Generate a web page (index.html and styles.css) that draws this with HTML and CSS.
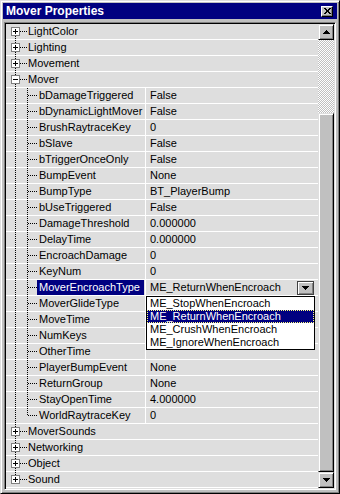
FILE: index.html
```html
<!DOCTYPE html>
<html lang="en">
<head>
    <meta charset="UTF-8">
    <title>Mover Properties</title>
    <link rel="stylesheet" href="styles.css">
</head>
<body>
    <div class="window">
        <div class="titlebar">
            <span>Mover Properties</span>
            <div class="close">
                <svg width="7" height="6" viewBox="0 0 7 6" shape-rendering="crispEdges">
                    <path d="M0 0h2v1H0zM5 0h2v1H5zM1 1h2v1H1zM4 1h2v1H4zM2 2h3v2H2zM1 4h2v1H1zM4 4h2v1H4zM0 5h2v1H0zM5 5h2v1H5z" fill="#000"/>
                </svg>
            </div>
        </div>
        <div class="panel">
            <div class="tree">
                <div class="row cat first"><div class="name"><span class="box"></span><span class="dash"></span><span class="label">LightColor</span></div></div>
                <div class="row cat"><div class="name"><span class="box"></span><span class="dash"></span><span class="label">Lighting</span></div></div>
                <div class="row cat"><div class="name"><span class="box"></span><span class="dash"></span><span class="label">Movement</span></div></div>
                <div class="row cat"><div class="name"><span class="box open"></span><span class="dash"></span><span class="label">Mover</span></div></div>
                <div class="row prop"><div class="name"><span class="dash"></span><span class="label">bDamageTriggered</span></div><div class="value">False</div></div>
                <div class="row prop"><div class="name"><span class="dash"></span><span class="label">bDynamicLightMover</span></div><div class="value">False</div></div>
                <div class="row prop"><div class="name"><span class="dash"></span><span class="label">BrushRaytraceKey</span></div><div class="value">0</div></div>
                <div class="row prop"><div class="name"><span class="dash"></span><span class="label">bSlave</span></div><div class="value">False</div></div>
                <div class="row prop"><div class="name"><span class="dash"></span><span class="label">bTriggerOnceOnly</span></div><div class="value">False</div></div>
                <div class="row prop"><div class="name"><span class="dash"></span><span class="label">BumpEvent</span></div><div class="value">None</div></div>
                <div class="row prop"><div class="name"><span class="dash"></span><span class="label">BumpType</span></div><div class="value">BT_PlayerBump</div></div>
                <div class="row prop"><div class="name"><span class="dash"></span><span class="label">bUseTriggered</span></div><div class="value">False</div></div>
                <div class="row prop"><div class="name"><span class="dash"></span><span class="label">DamageThreshold</span></div><div class="value">0.000000</div></div>
                <div class="row prop"><div class="name"><span class="dash"></span><span class="label">DelayTime</span></div><div class="value">0.000000</div></div>
                <div class="row prop"><div class="name"><span class="dash"></span><span class="label">EncroachDamage</span></div><div class="value">0</div></div>
                <div class="row prop"><div class="name"><span class="dash"></span><span class="label">KeyNum</span></div><div class="value">0</div></div>
                <div class="row prop sel">
                    <div class="name"><span class="dash"></span><span class="label">MoverEncroachType</span></div>
                    <div class="value combo">
                        <span>ME_ReturnWhenEncroach</span>
                        <span class="drop">
                            <svg width="7" height="4" viewBox="0 0 7 4" shape-rendering="crispEdges"><path d="M0 0h7v1H0zM1 1h5v1H1zM2 2h3v1H2zM3 3h1v1H3z" fill="#000"/></svg>
                        </span>
                        <ul class="list">
                            <li>ME_StopWhenEncroach</li>
                            <li class="active">ME_ReturnWhenEncroach</li>
                            <li>ME_CrushWhenEncroach</li>
                            <li>ME_IgnoreWhenEncroach</li>
                        </ul>
                    </div>
                </div>
                <div class="row prop"><div class="name"><span class="dash"></span><span class="label">MoverGlideType</span></div><div class="value"></div></div>
                <div class="row prop"><div class="name"><span class="dash"></span><span class="label">MoveTime</span></div><div class="value"></div></div>
                <div class="row prop"><div class="name"><span class="dash"></span><span class="label">NumKeys</span></div><div class="value"></div></div>
                <div class="row prop"><div class="name"><span class="dash"></span><span class="label">OtherTime</span></div><div class="value"></div></div>
                <div class="row prop"><div class="name"><span class="dash"></span><span class="label">PlayerBumpEvent</span></div><div class="value">None</div></div>
                <div class="row prop"><div class="name"><span class="dash"></span><span class="label">ReturnGroup</span></div><div class="value">None</div></div>
                <div class="row prop"><div class="name"><span class="dash"></span><span class="label">StayOpenTime</span></div><div class="value">4.000000</div></div>
                <div class="row prop last"><div class="name"><span class="dash"></span><span class="label">WorldRaytraceKey</span></div><div class="value">0</div></div>
                <div class="row cat"><div class="name"><span class="box"></span><span class="dash"></span><span class="label">MoverSounds</span></div></div>
                <div class="row cat"><div class="name"><span class="box"></span><span class="dash"></span><span class="label">Networking</span></div></div>
                <div class="row cat"><div class="name"><span class="box"></span><span class="dash"></span><span class="label">Object</span></div></div>
                <div class="row cat last"><div class="name"><span class="box"></span><span class="dash"></span><span class="label">Sound</span></div></div>
            </div>
            <div class="scrollbar">
                <div class="btn">
                    <svg width="7" height="4" viewBox="0 0 7 4" shape-rendering="crispEdges"><path d="M3 0h1v1H3zM2 1h3v1H2zM1 2h5v1H1zM0 3h7v1H0z" fill="#000"/></svg>
                </div>
                <div class="track"></div>
                <div class="btn thumb"></div>
                <div class="btn">
                    <svg width="7" height="4" viewBox="0 0 7 4" shape-rendering="crispEdges"><path d="M0 0h7v1H0zM1 1h5v1H1zM2 2h3v1H2zM3 3h1v1H3z" fill="#000"/></svg>
                </div>
            </div>
        </div>
    </div>
</body>
</html>
```

FILE: styles.css
```css
body {
    margin: 0;
    font-family: 'Liberation Sans', Arial, sans-serif;
    font-size: 11px;
    background-color: #c0c0c0;
}
.window {
    box-sizing: border-box;
    width: 340px;
    height: 494px;
    padding: 2px;
    border: 1px solid;
    border-color: #dfdfdf #000 #000 #dfdfdf;
    box-shadow: inset 1px 1px #fff, inset -1px -1px #808080;
    background-color: #c0c0c0;
    display: flex;
    flex-direction: column;
}
.titlebar {
    height: 16px;
    flex: none;
    background-color: #000080;
    color: #fff;
    font-size: 12px;
    font-weight: bold;
    line-height: 16px;
    padding-left: 3px;
    display: flex;
    align-items: center;
    justify-content: space-between;
}
.close {
    box-sizing: border-box;
    width: 12px;
    height: 11px;
    margin-right: 4px;
    background-color: #c0c0c0;
    border: 1px solid;
    border-color: #fff #000 #000 #fff;
    box-shadow: inset -1px -1px #808080;
    display: flex;
    align-items: center;
    justify-content: center;
}
.panel {
    margin: 3px 1px 1px;
    flex: 1;
    display: flex;
    padding: 1px;
    border: 1px solid;
    border-color: #808080 #fff #fff #808080;
    box-shadow: inset 1px 1px #000, inset -1px -1px #dfdfdf;
}
.tree {
    flex: 1;
    display: flex;
    flex-direction: column;
}
.row {
    height: 15px;
    display: flex;
    background-color: #dedede;
    border-bottom: 1px solid #fff;
    white-space: nowrap;
}
.name {
    display: flex;
    align-items: center;
    background-repeat: no-repeat;
}
.cat .name {
    flex: 1;
    padding-left: 5px;
    background-image: repeating-linear-gradient(#000 0 1px, transparent 1px 2px);
    background-position: 9px 0;
    background-size: 1px 100%;
}
.cat.first .name {
    background-position: 9px 8px;
    background-size: 1px 8px;
}
.cat.last .name {
    background-size: 1px 8px;
}
.prop .name {
    width: 139px;
    flex: none;
    background-image: repeating-linear-gradient(#000 0 1px, transparent 1px 2px), repeating-linear-gradient(#000 0 1px, transparent 1px 2px);
    background-position: 9px 0, 21px 0;
    background-size: 1px 100%, 1px 100%;
}
.prop.last .name {
    background-size: 1px 100%, 1px 8px;
}
.box {
    width: 7px;
    height: 7px;
    flex: none;
    border: 1px solid #808080;
    background: linear-gradient(#000, #000) center / 5px 1px no-repeat,
        linear-gradient(#000, #000) center / 1px 5px no-repeat,
        #fff;
}
.box.open {
    background: linear-gradient(#000, #000) center / 5px 1px no-repeat, #fff;
}
.dash {
    width: 7px;
    height: 0;
    flex: none;
    border-top: 1px dotted #000;
}
.prop .dash {
    width: 9px;
    margin-left: 22px;
}
.label {
    line-height: 15px;
    padding-left: 1px;
    padding-right: 2px;
}
.prop .label {
    padding-left: 2px;
}
.sel .label {
    flex: 1;
    margin-right: 1px;
    background-color: #000080;
    color: #fff;
}
.value {
    flex: 1;
    border-left: 1px solid #fff;
    padding-left: 4px;
    line-height: 15px;
}
.combo {
    position: relative;
    display: flex;
    align-items: center;
    justify-content: space-between;
    padding-right: 4px;
}
.drop {
    box-sizing: border-box;
    width: 17px;
    height: 14px;
    border: 1px solid #404040;
    background-color: #c0c0c0;
    box-shadow: inset 1px 1px #fff, inset -1px -1px #808080;
    display: flex;
    align-items: center;
    justify-content: center;
}
.list {
    position: absolute;
    top: 16px;
    left: 0;
    z-index: 2;
    box-sizing: border-box;
    width: 169px;
    margin: 0;
    padding: 0;
    list-style-type: none;
    background-color: #fff;
    border: 1px solid #000;
}
.list li {
    height: 13px;
    line-height: 13px;
    padding-left: 3px;
}
.list li.active {
    background-color: #000080;
    color: #fff;
    outline: 1px dotted #ffff80;
    outline-offset: -1px;
}
.scrollbar {
    width: 16px;
    flex: none;
    display: grid;
    grid-template-rows: 16px 73px 1fr 16px;
}
.btn {
    box-sizing: border-box;
    background-color: #c0c0c0;
    border: 1px solid;
    border-color: #dfdfdf #000 #000 #dfdfdf;
    box-shadow: inset 1px 1px #fff, inset -1px -1px #808080;
    display: flex;
    align-items: center;
    justify-content: center;
}
.track {
    background-color: #fff;
    background-image: conic-gradient(#c0c0c0 25%, #fff 0 50%, #c0c0c0 0 75%, #fff 0);
    background-size: 2px 2px;
}
```
